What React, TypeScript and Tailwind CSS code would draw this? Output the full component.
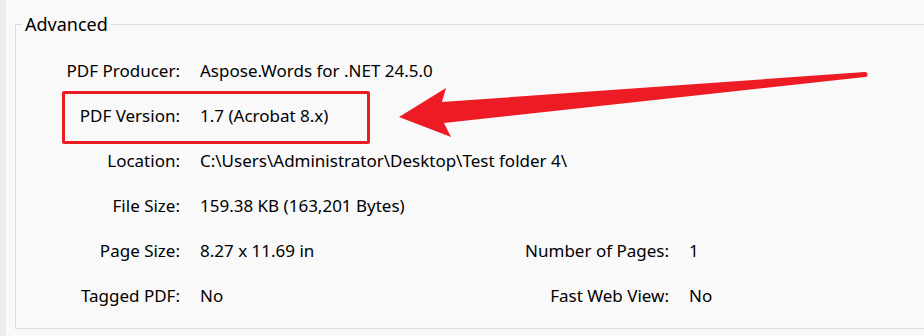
import React from "react";

const font = { fontFamily: '"Noto Sans", "Open Sans", sans-serif' };

function Row({ label, value, label2, value2 }: { label: string; value: string; label2?: string; value2?: string }) {
  return (
    <>
      <div className="text-right">{label}</div>
      {label2 ? (
        <>
          <div>{value}</div>
          <div className="text-right">{label2}</div>
          <div>{value2}</div>
        </>
      ) : (
        <div className="col-span-3">{value}</div>
      )}
    </>
  );
}

export default function App() {
  return (
    <div className="relative w-[924px] h-[336px] bg-[#f9f9f9] flex overflow-hidden text-black" style={font}>
      <div className="w-[7px] shrink-0 h-full bg-[#ececec] border-r border-white" />
      <div className="flex-1 min-w-0 pl-[8px]">
        <fieldset className="border border-[#dcdcdc] w-[1000px] h-[317px] mt-[12px] pt-[12px]">
          <legend className="ml-[6px] px-[3px] text-[18px] leading-[24px]">Advanced</legend>
          <div className="grid grid-cols-[164px_300px_149px_auto] gap-x-[20px] text-[17px] leading-[45px] auto-rows-[45px]">
            <Row label="PDF Producer:" value="Aspose.Words for .NET 24.5.0" />
            <Row label="PDF Version:" value="1.7 (Acrobat 8.x)" />
            <Row label="Location:" value="C:\Users\Administrator\Desktop\Test folder 4\" />
            <Row label="File Size:" value="159.38 KB (163,201 Bytes)" />
            <Row label="Page Size:" value="8.27 x 11.69 in" label2="Number of Pages:" value2="1" />
            <Row label="Tagged PDF:" value="No" label2="Fast Web View:" value2="No" />
          </div>
        </fieldset>
      </div>
      <div className="absolute left-[62px] top-[91px] w-[308px] h-[53px] border-[3px] border-[#ed1c24] rounded-[2px]" />
      <svg className="absolute left-0 top-0" width="924" height="336" viewBox="0 0 924 336">
        <polygon
          fill="#ed1c24"
          points="399,117 446,88 442,102 865,72 865,77 444,123 451,137"
        />
        <circle cx="865" cy="74.5" r="2.5" fill="#ed1c24" />
      </svg>
    </div>
  );
}
